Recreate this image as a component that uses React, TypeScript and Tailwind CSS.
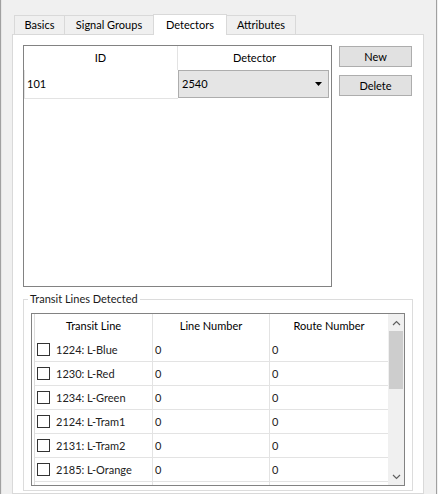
import React from 'react';

const lines = [
  { id: '1224', name: 'L-Blue' },
  { id: '1230', name: 'L-Red' },
  { id: '1234', name: 'L-Green' },
  { id: '2124', name: 'L-Tram1' },
  { id: '2131', name: 'L-Tram2' },
  { id: '2185', name: 'L-Orange' },
];

const tabs = [
  { label: 'Basics', w: 'w-[51px]' },
  { label: 'Signal Groups', w: 'w-[90px]' },
  { label: 'Detectors', w: 'w-[74px]', active: true },
  { label: 'Attributes', w: 'w-[70px]' },
];

function Chevron({ up }: { up?: boolean }) {
  return (
    <svg width="9" height="6" viewBox="0 0 9 6" className="block">
      <path
        d={up ? 'M1 5 L4.5 1.5 L8 5' : 'M1 1 L4.5 4.5 L8 1'}
        fill="none"
        stroke="#606060"
        strokeWidth="1.2"
      />
    </svg>
  );
}

export default function App() {
  return (
    <div className="flex w-[438px] h-[494px] overflow-hidden bg-[#f0f0f0] text-[11px] leading-[14px] text-black font-['Lato',sans-serif]">
      {/* splitter edge */}
      <div className="w-[1px] bg-[#a0a0a0]" />
      <div className="w-[1px] bg-[#e6e6e6]" />

      <div className="flex flex-col w-[434px] overflow-hidden">
        {/* Tab strip */}
        <div className="flex items-end h-[34px] pl-[12px] shrink-0">
          {tabs.map((t, i) => (
            <div
              key={t.label}
              className={`${t.w} ${i > 0 ? '-ml-[1px]' : ''} flex items-center justify-center border-l border-t border-r border-[#d9d9d9] ${
                t.active
                  ? 'relative z-10 h-[21px] -mb-[1px] bg-white pb-[1px]'
                  : 'h-[19px] bg-[#f0f0f0]'
              }`}
            >
              {t.label}
            </div>
          ))}
        </div>

        {/* Tab panel */}
        <div className="ml-[10px] w-[412px] flex-1 bg-white border border-[#d9d9d9] pt-[10px] pl-[10px]">
          <div className="flex gap-[7px]">
            {/* Detector grid */}
            <div className="w-[309px] h-[242px] border border-[#828282] bg-white flex flex-col">
              <div className="flex h-[24px]">
                <div className="w-[154px] flex items-center justify-center border-r border-[#e3e3e3]">ID</div>
                <div className="flex-1 flex items-center justify-center">Detector</div>
              </div>
              <div className="flex h-[29px]">
                <div className="w-[154px] flex items-center border-l border-[#e3e3e3] border-b pl-[2px]">101</div>
                <div className="flex-1 mr-[2px] h-[28px] bg-[#e5e5e5] border border-[#adadad] flex items-center pl-[3px] pr-[6px] justify-between">
                  <span>2540</span>
                  <svg width="7" height="4" viewBox="0 0 7 4" className="block">
                    <path d="M0 0 H7 L3.5 4 Z" fill="#000" />
                  </svg>
                </div>
              </div>
            </div>

            {/* Buttons */}
            <div className="flex flex-col gap-[8px] pt-[1px]">
              <button className="w-[73px] h-[21px] bg-[#e1e1e1] border border-[#adadad] flex items-center justify-center">
                New
              </button>
              <button className="w-[73px] h-[21px] bg-[#e1e1e1] border border-[#adadad] flex items-center justify-center">
                Delete
              </button>
            </div>
          </div>

          {/* Group box */}
          <fieldset className="mt-[5px] w-[390px] border border-[#dcdcdc] pb-[4px]">
            <legend className="ml-[4px] px-[2px] text-[#1a1a1a]">Transit Lines Detected</legend>
            <div className="mt-[7px] ml-[7px] w-[374px] h-[173px] border border-[#828282] flex overflow-hidden text-[#222]">
              <div className="w-[3px] border-r border-[#dcdcdc]" />
              <div className="flex flex-col w-[353px]">
                <div className="flex h-[24px] shrink-0 text-black">
                  <div className="w-[118px] border-r border-[#e3e3e3] flex items-center justify-center">Transit Line</div>
                  <div className="w-[117px] border-r border-[#e3e3e3] flex items-center justify-center">Line Number</div>
                  <div className="w-[118px] flex items-center justify-center">Route Number</div>
                </div>
                {[...lines, { id: '', name: '' }].map((l, i) => (
                  <div key={i} className="flex h-[24px] shrink-0 border-b border-[#e3e3e3]">
                    <div className="w-[118px] border-r border-[#e3e3e3] flex items-center pl-[2px]">
                      {l.id && (
                        <>
                          <span className="w-[13px] h-[13px] border border-[#333] bg-white shrink-0" />
                          <span className="ml-[6px]">{l.id}: {l.name}</span>
                        </>
                      )}
                    </div>
                    <div className="w-[117px] border-r border-[#e3e3e3] flex items-center pl-[2px]">{l.id && '0'}</div>
                    <div className="w-[118px] flex items-center pl-[2px]">{l.id && '0'}</div>
                  </div>
                ))}
              </div>
              {/* scrollbar */}
              <div className="w-[16px] bg-[#f0f0f0] flex flex-col">
                <div className="h-[17px] flex items-center justify-center shrink-0">
                  <Chevron up />
                </div>
                <div className="mx-[1px] h-[58px] bg-[#cdcdcd] shrink-0" />
                <div className="flex-1" />
                <div className="h-[17px] flex items-center justify-center shrink-0">
                  <Chevron />
                </div>
              </div>
            </div>
          </fieldset>
        </div>
      </div>

      <div className="w-[1px] bg-[#a0a0a0]" />
      <div className="w-[1px] bg-[#f0f0f0]" />
    </div>
  );
}
